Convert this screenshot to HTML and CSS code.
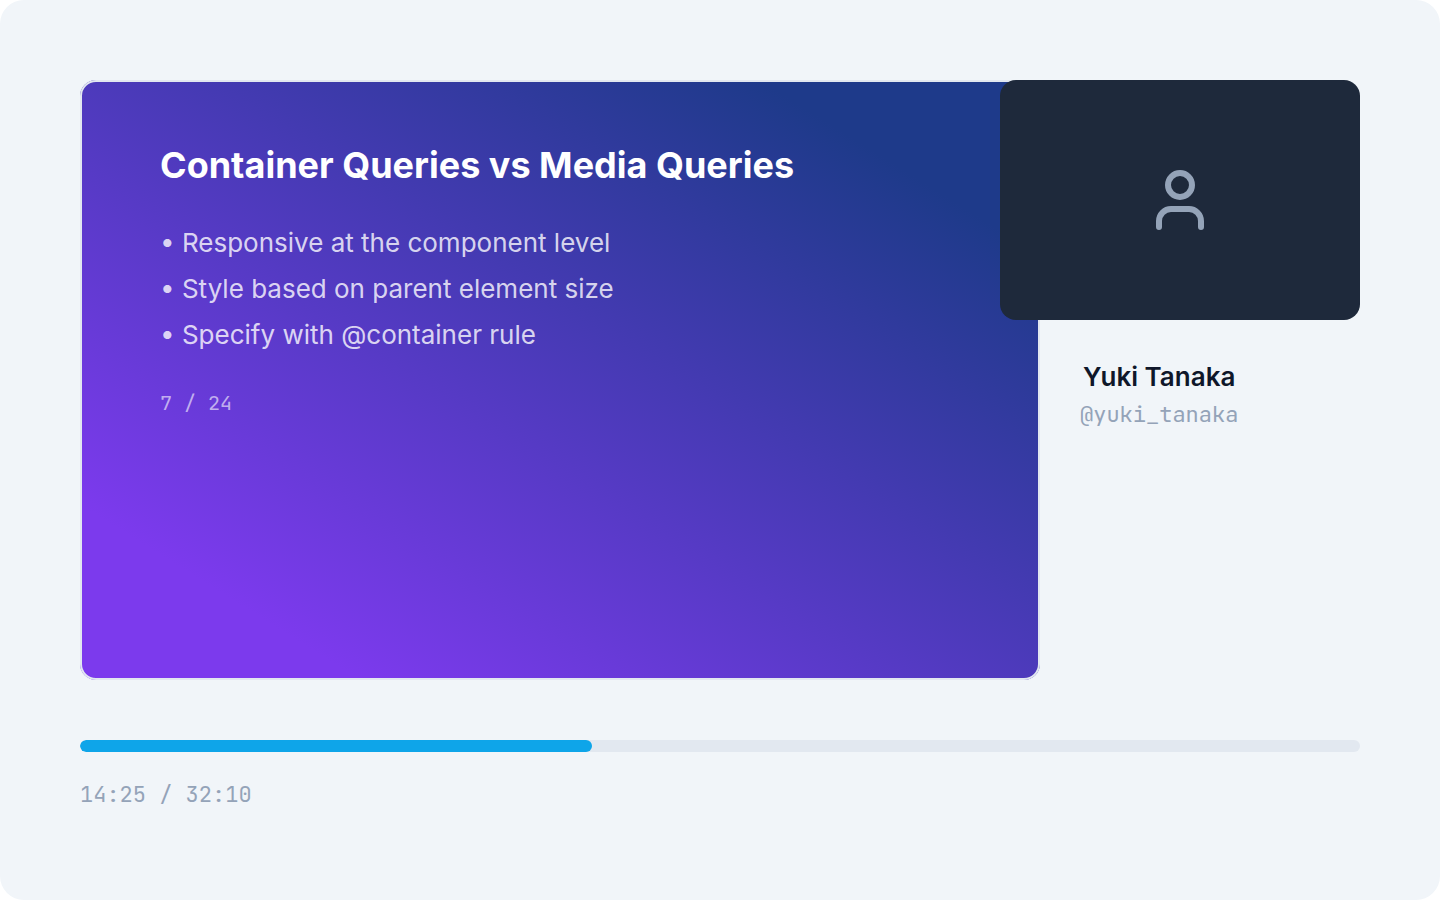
FILE: index.html
```html
<!DOCTYPE html>
<html lang="en">
<head>
  <meta charset="UTF-8">
  <meta name="viewport" content="width=device-width, initial-scale=1.0">
  <title>Container Queries vs Media Queries</title>
  <link rel="stylesheet" href="styles.css">
</head>
<body>
  <main class="player">
    <div class="stage">
      <!-- Current slide -->
      <section class="slide">
        <h1>Container Queries vs Media Queries</h1>
        <ul>
          <li>• Responsive at the component level</li>
          <li>• Style based on parent element size</li>
          <li>• Specify with @container rule</li>
        </ul>
        <p class="slide-number">7 / 24</p>
      </section>

      <!-- Speaker camera and name -->
      <aside class="speaker">
        <div class="camera">
          <svg class="camera-icon" viewBox="0 0 24 24" aria-hidden="true">
            <circle cx="12" cy="7" r="4"/>
            <path d="M19 21v-2a4 4 0 0 0-4-4H9a4 4 0 0 0-4 4v2"/>
          </svg>
        </div>
        <div class="speaker-info">
          <h2>Yuki Tanaka</h2>
          <p>@yuki_tanaka</p>
        </div>
      </aside>
    </div>

    <!-- Playback position -->
    <progress class="timeline" value="40" max="100" aria-label="Playback position"></progress>
    <p class="time">14:25 / 32:10</p>
  </main>
</body>
</html>
```
FILE: styles.css
```css
* {
  box-sizing: border-box;
}

html {
  background: #ffffff;
}

body {
  margin: 0;
  font-family: Inter, sans-serif;
  color: #0f172a;
}

h1,
h2,
p,
ul {
  margin: 0;
  padding: 0;
}

/* Page panel */
.player {
  min-height: 100vh;
  padding: 80px;
  background: #f1f5f9;
  border-radius: 24px;
}

/* Slide on the left, speaker on the right */
.stage {
  display: grid;
  grid-template-columns: 3fr 1fr;
  align-items: start;
}

/* Slide */
.slide {
  aspect-ratio: 8 / 5;
  padding: 62px 80px;
  color: #ffffff;
  background: linear-gradient(to top right, #7c3aed 14.6%, #1e3a8a 85.4%);
  border-radius: 16px;
  box-shadow: inset 0 0 0 2px #e2e8f0;
}

.slide h1 {
  font-size: 36px;
  font-weight: 700;
  line-height: 46px;
}

.slide ul {
  margin-top: 32px;
  list-style: none;
}

.slide li {
  font-size: 26px;
  line-height: 46px;
  color: rgba(255, 255, 255, 0.8);
}

.slide-number {
  margin-top: 32px;
  font-family: "JetBrains Mono", "DejaVu Sans Mono", monospace;
  font-size: 20px;
  line-height: 26px;
  color: rgba(255, 255, 255, 0.6);
}

/* Camera overlaps the edge of the slide */
.camera {
  position: relative;
  display: flex;
  align-items: center;
  justify-content: center;
  aspect-ratio: 3 / 2;
  margin-left: -40px;
  background: #1e293b;
  border-radius: 16px;
}

.camera-icon {
  width: 72px;
  height: 72px;
  fill: none;
  stroke: #94a3b8;
  stroke-width: 2;
  stroke-linecap: round;
  stroke-linejoin: round;
}

.speaker-info {
  width: fit-content;
  margin: 40px 0 0 40px;
  text-align: center;
}

.speaker-info h2 {
  font-size: 26px;
  font-weight: 600;
  line-height: 34px;
}

.speaker-info p {
  margin-top: 6px;
  font-family: "JetBrains Mono", "DejaVu Sans Mono", monospace;
  font-size: 22px;
  line-height: 30px;
  color: #94a3b8;
}

/* Timeline */
.timeline {
  display: block;
  width: 100%;
  height: 12px;
  margin-top: 60px;
  appearance: none;
  border: none;
  border-radius: 6px;
  background: #e2e8f0;
  overflow: hidden;
}

.timeline::-webkit-progress-bar {
  background: #e2e8f0;
}

.timeline::-webkit-progress-value {
  background: #0ea5e9;
  border-radius: 6px;
}

.time {
  margin-top: 28px;
  font-family: "JetBrains Mono", "DejaVu Sans Mono", monospace;
  font-size: 22px;
  line-height: 30px;
  color: #94a3b8;
}
```
